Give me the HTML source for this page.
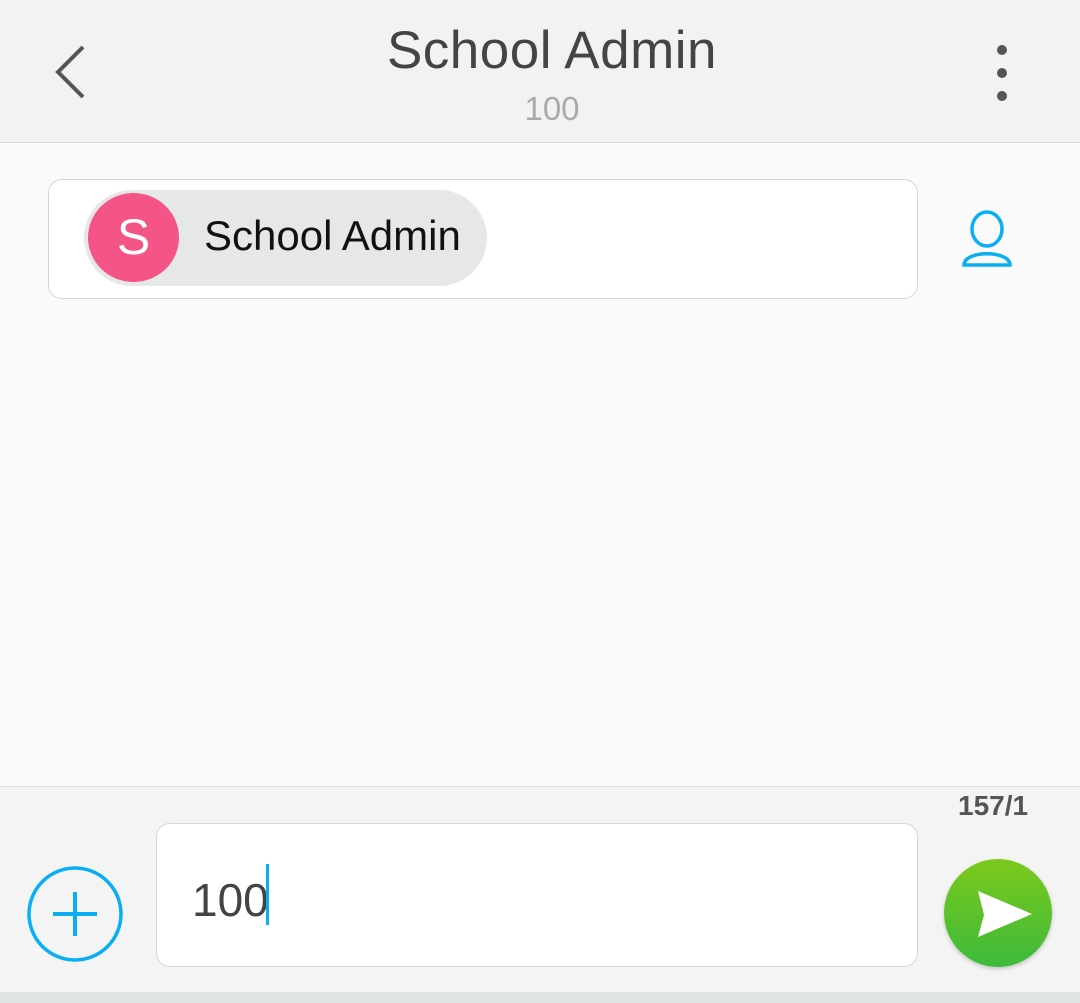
<!DOCTYPE html>
<html><head><style>
body{margin:0;width:1080px;height:1003px;position:relative;background:#fafafa;font-family:"Liberation Sans",sans-serif;overflow:hidden}
.hdr{position:absolute;left:0;top:0;width:1080px;height:142px;background:#f2f2f2;border-bottom:1px solid #d8d8d8}
.t{position:absolute;left:0;width:1104px;text-align:center}
.box{position:absolute;left:48px;top:179px;width:868px;height:118px;background:#fff;border:1px solid #d6d6d6;border-radius:14px}
.chip{position:absolute;left:84px;top:190px;width:403px;height:96px;border-radius:48px;background:#e6e7e9}
.av{position:absolute;left:88px;top:193px;width:91px;height:89px;border-radius:50%;background:#f55486;color:#fff;font-size:50px;text-align:center;line-height:89px}
.bot{position:absolute;left:0;top:786px;width:1080px;height:206px;background:#f4f4f4;border-top:1px solid #dcdcdc}
.strip{position:absolute;left:0;top:992px;width:1080px;height:11px;background:#e0e4e4}
.in{position:absolute;left:156px;top:823px;width:760px;height:142px;background:#fff;border:1px solid #d6d6d6;border-radius:14px}
.send{position:absolute;left:944px;top:859px;width:108px;height:108px;border-radius:50%;background:linear-gradient(#7cc91b,#3dba3b);box-shadow:0 2px 4px rgba(0,0,0,.2)}
</style></head><body>
<div class="hdr"></div>
<svg style="position:absolute;left:50px;top:42px" width="40" height="60"><path d="M33 5 L8 30 L33 55" fill="none" stroke="#555" stroke-width="4"/></svg>
<div class="t" style="top:20px;font-size:53px;color:#444;letter-spacing:0.5px">School Admin</div>
<div class="t" style="top:90px;font-size:33px;color:#aaa">100</div>
<svg style="position:absolute;left:990px;top:42px" width="24" height="62"><circle cx="12" cy="8" r="5" fill="#555"/><circle cx="12" cy="31" r="5" fill="#555"/><circle cx="12" cy="54" r="5" fill="#555"/></svg>
<div class="box"></div>
<div class="chip"></div>
<div class="av">S</div>
<div style="position:absolute;left:204px;top:212px;font-size:42px;color:#111">School Admin</div>
<svg style="position:absolute;left:958px;top:208px" width="58" height="62"><ellipse cx="29" cy="21" rx="15" ry="17" fill="none" stroke="#0aaef3" stroke-width="3.5"/><path d="M6 57 C6 42 52 42 52 57 Z" fill="none" stroke="#0aaef3" stroke-width="3.5"/></svg>
<div class="bot"></div>
<div style="position:absolute;left:958px;top:790px;font-size:28px;font-weight:bold;color:#555">157/1</div>
<svg style="position:absolute;left:26px;top:865px" width="98" height="98"><circle cx="49" cy="49" r="46" fill="none" stroke="#0aaef3" stroke-width="3.5"/><path d="M27 49H71M49 27V71" stroke="#0aaef3" stroke-width="4"/></svg>
<div class="in"></div>
<div style="position:absolute;left:192px;top:873px;font-size:46px;color:#444">100</div>
<div style="position:absolute;left:266px;top:864px;width:3px;height:61px;background:#0aaef3"></div>
<div class="send"></div>
<svg style="position:absolute;left:975px;top:889px" width="60" height="50"><path d="M3 2 L57 25 L3 48 L9 26 Z" fill="#fff"/></svg>
<div class="strip"></div>
</body></html>
